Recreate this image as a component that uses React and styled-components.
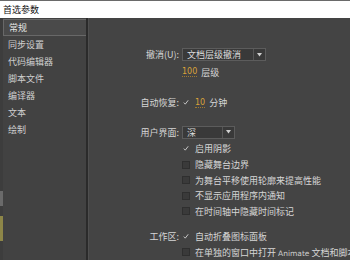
import React from 'react';
import styled, { createGlobalStyle } from 'styled-components';

const GlobalStyle = createGlobalStyle`
    html, body {
        margin: 0;
        padding: 0;
        background: #434343;
        overflow: hidden;
    }
    body {
        font-family: "Noto Sans CJK SC", "Noto Sans", sans-serif;
    }
`;

const Wrapper = styled.div`
    display: flex;
    flex-direction: column;
    width: 350px;
    height: 260px;
    background: #434343;
    overflow: hidden;
`;

const TitleBar = styled.div`
    height: 17px;
    border-top: 1px solid #6a6a6a;
    background: #ffffff;
    color: #111;
    font-size: 9px;
    line-height: 17px;
    padding-left: 3px;
    flex-shrink: 0;
`;

const Body = styled.div`
    display: flex;
    flex: 1;
    min-height: 0;
`;

const EdgeStrip = styled.div`
    width: 3px;
    display: flex;
    flex-direction: column;
    background: #3d3d3d;
`;

const EdgeBlock = styled.div`
    height: ${props => props.h}px;
    background: ${props => props.color};
`;

const Sidebar = styled.div`
    width: 83px;
    padding-top: 1px;
    background: #424242;
    border-right: 2px solid #2b2b2b;
    display: flex;
    flex-direction: column;
`;

const NavItem = styled.div`
    height: ${props => props.active ? 15 : 17}px;
    line-height: ${props => props.active ? 15 : 17}px;
    padding-left: 5px;
    font-size: 9px;
    color: ${props => props.active ? '#e4e4e4' : '#cfcfcf'};
    background: ${props => props.active ? '#4a4a4a' : 'transparent'};
    border: ${props => props.active ? '1px solid #686868' : 'none'};
    border-right: none;
    white-space: nowrap;
`;

const Content = styled.div`
    flex: 1;
    border-left: 1px solid #4f4f4f;
    background: #444444;
    display: flex;
    flex-direction: column;
    min-width: 0;
`;

const Row = styled.div`
    display: grid;
    grid-template-columns: 90px 1fr;
    column-gap: 3px;
    align-items: center;
    height: 16px;
    margin-top: ${props => props.gap || 0}px;
    font-size: 9px;
    color: #d6d6d6;
    white-space: nowrap;
`;

const Label = styled.div`
    text-align: right;
`;

const Field = styled.div`
    display: flex;
    align-items: center;
    gap: 4px;
    min-width: 0;
`;

const Select = styled.div`
    width: ${props => props.width}px;
    height: 13px;
    box-sizing: border-box;
    border: 1px solid #5c5c5c;
    background: #393939;
    display: flex;
    align-items: center;
    color: #dcdcdc;
`;

const SelectText = styled.span`
    flex: 1;
    padding-left: 4px;
    line-height: 11px;
`;

const SelectArrow = styled.span`
    width: 11px;
    height: 11px;
    border-left: 1px solid #555;
    display: flex;
    align-items: center;
    justify-content: center;
`;

const HotNumber = styled.span`
    color: #d9a23a;
    border-bottom: 1px dotted #a07a30;
    line-height: 9px;
    font-family: "DejaVu Sans", sans-serif;
    font-size: 8px;
`;

const Box = styled.span`
    width: 8px;
    height: 8px;
    box-sizing: border-box;
    border: 1px solid #2f2f2f;
    background: ${props => props.checked ? 'transparent' : '#3a3a3a'};
    display: inline-flex;
    align-items: center;
    justify-content: center;
    margin-right: 1px;
    flex-shrink: 0;
    border-color: ${props => props.checked ? 'transparent' : '#2f2f2f'};
`;

const Latin = styled.span`
    font-family: "DejaVu Sans", sans-serif;
    font-size: 7.5px;
    color: #cfcfcf;
`;

function Check({ checked }) {
    return (
        <Box checked={checked}>
            {checked && (
                <svg width="9" height="9" viewBox="0 0 9 9">
                    <path d="M1.2 4.6 L3.4 7 L7.8 1.2" fill="none" stroke="#e6e6e6" strokeWidth="1.2" />
                </svg>
            )}
        </Box>
    );
}

function Arrow() {
    return (
        <svg width="5" height="4" viewBox="0 0 5 4">
            <path d="M0 0 L5 0 L2.5 3.5 Z" fill="#cfcfcf" />
        </svg>
    );
}

const navItems = ['常规', '同步设置', '代码编辑器', '脚本文件', '编译器', '文本', '绘制'];

const uiOptions = [
    { text: '启用阴影', checked: true, gap: 1 },
    { text: '隐藏舞台边界', checked: false, gap: 1 },
    { text: '为舞台平移使用轮廓来提高性能', checked: false, gap: 0 },
    { text: '不显示应用程序内通知', checked: false, gap: 0 },
    { text: '在时间轴中隐藏时间标记', checked: false, gap: 0 },
];

export default function App() {
    return (
        <Wrapper>
            <GlobalStyle />
            <TitleBar>首选参数</TitleBar>
            <Body>
                <EdgeStrip>
                    <EdgeBlock h={173} color="#3d3d3d" />
                    <EdgeBlock h={15} color="#6a6a6a" />
                    <EdgeBlock h={10} color="#3d3d3d" />
                    <EdgeBlock h={25} color="#8d8648" />
                </EdgeStrip>
                <Sidebar>
                    {navItems.map((item, i) => (
                        <NavItem key={item} active={i === 0}>{item}</NavItem>
                    ))}
                </Sidebar>
                <Content>
                    <Row gap={29}>
                        <Label>撤消(U):</Label>
                        <Field>
                            <Select width={84}>
                                <SelectText>文档层级撤消</SelectText>
                                <SelectArrow><Arrow /></SelectArrow>
                            </Select>
                        </Field>
                    </Row>
                    <Row gap={2}>
                        <Label />
                        <Field>
                            <HotNumber>100</HotNumber>
                            <span>层级</span>
                        </Field>
                    </Row>
                    <Row gap={15}>
                        <Label>自动恢复:</Label>
                        <Field>
                            <Check checked />
                            <HotNumber>10</HotNumber>
                            <span>分钟</span>
                        </Field>
                    </Row>
                    <Row gap={14}>
                        <Label>用户界面:</Label>
                        <Field>
                            <Select width={53}>
                                <SelectText>深</SelectText>
                                <SelectArrow><Arrow /></SelectArrow>
                            </Select>
                        </Field>
                    </Row>
                    {uiOptions.map(opt => (
                        <Row key={opt.text} gap={opt.gap}>
                            <Label />
                            <Field>
                                <Check checked={opt.checked} />
                                <span>{opt.text}</span>
                            </Field>
                        </Row>
                    ))}
                    <Row gap={10}>
                        <Label>工作区:</Label>
                        <Field>
                            <Check checked />
                            <span>自动折叠图标面板</span>
                        </Field>
                    </Row>
                    <Row>
                        <Label />
                        <Field>
                            <Check />
                            <span>在单独的窗口中打开 <Latin>Animate</Latin> 文档和脚本文件</span>
                        </Field>
                    </Row>
                </Content>
            </Body>
        </Wrapper>
    );
}
